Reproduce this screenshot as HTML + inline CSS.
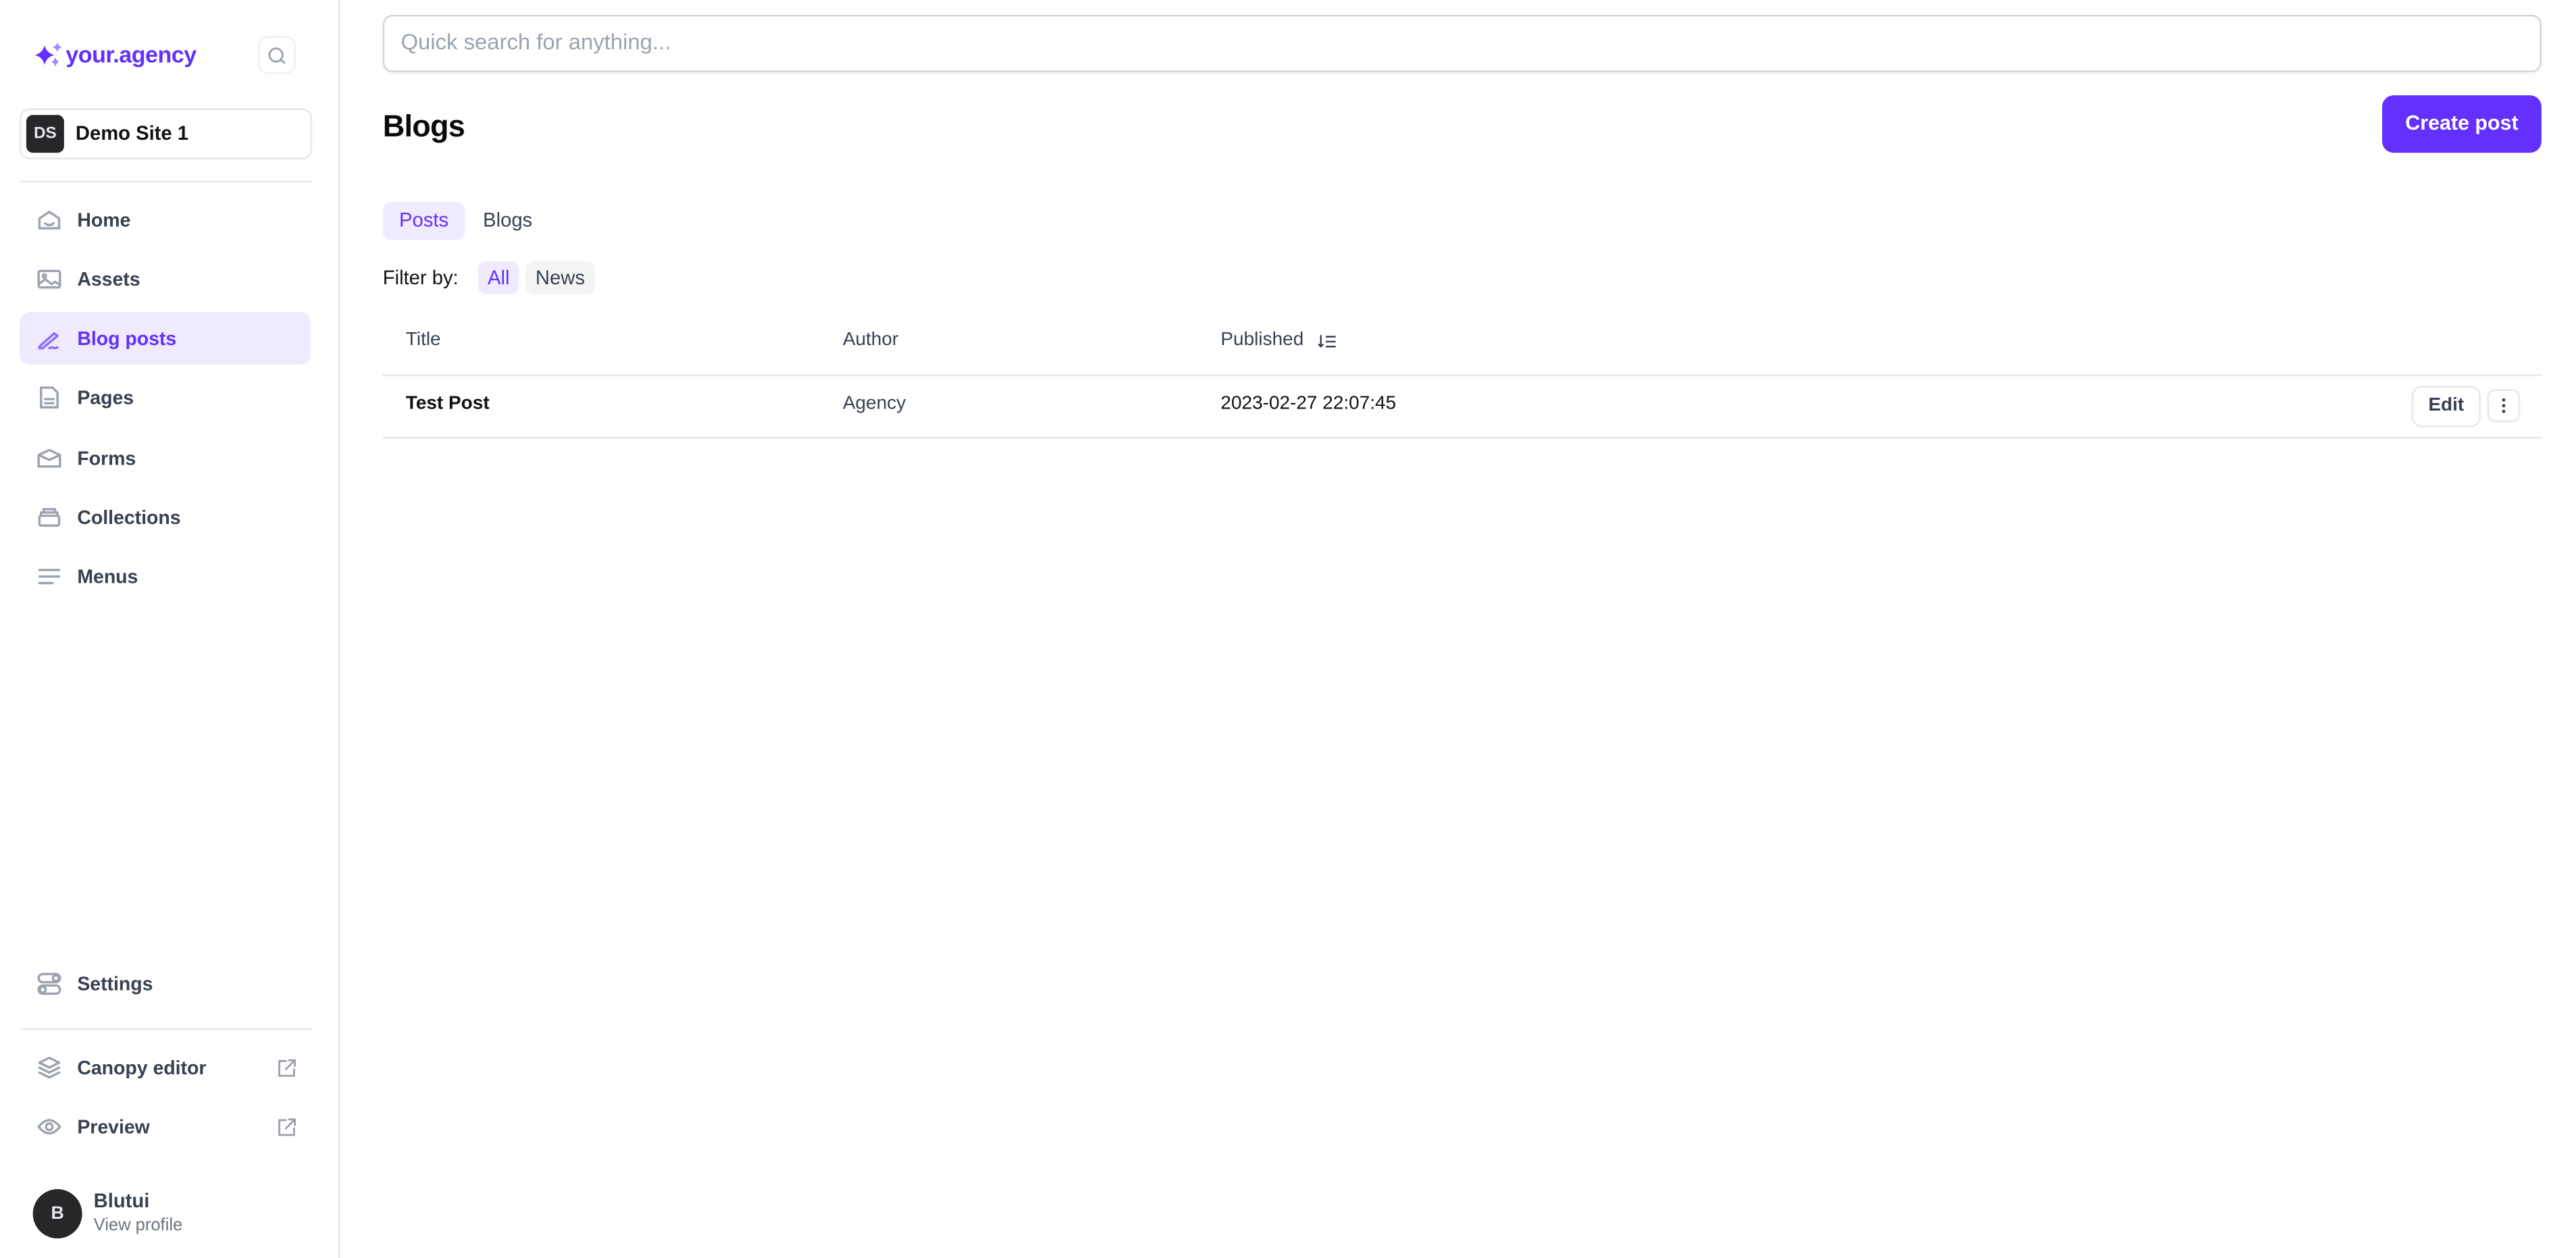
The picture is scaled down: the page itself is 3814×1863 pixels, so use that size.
<!DOCTYPE html>
<html><head><meta charset="utf-8"><style>
*{box-sizing:border-box;margin:0;padding:0}
html,body{width:3814px;height:1862px;overflow:hidden;background:#fff}
#w{position:absolute;left:0;top:0;width:1568px;height:766px;transform:scale(2.4324);transform-origin:0 0;font-family:"Liberation Sans",sans-serif;color:#111827}
.a{position:absolute}
.nav{position:absolute;left:12px;width:177px;height:32px;display:flex;align-items:center;font-size:11.7px;font-weight:bold;color:#374151}
.nav svg.ic{position:absolute;left:10px;width:16px;height:16px;fill:none;stroke:#9ca3af;stroke-width:1.4;stroke-linecap:round;stroke-linejoin:round}
.nav span{position:absolute;left:35px}
.nav svg.ext{position:absolute;left:156px;width:13px;height:13px;fill:none;stroke:#9ca3af;stroke-width:1.2;stroke-linecap:round;stroke-linejoin:round}
</style></head><body><div id="w">
<div class="a" style="left:206px;top:0;width:1px;height:766px;background:#e5e7eb"></div>
<svg class="a" style="left:20px;top:25px" width="19" height="17" viewBox="0 0 16 14"><path d="M6 2 Q7 6 11 7 Q7 8 6 12 Q5 8 1 7 Q5 6 6 2Z" fill="#6330ff"/><path d="M12.5 0.5 Q13 2.5 15 3 Q13 3.5 12.5 5.5 Q12 3.5 10 3 Q12 2.5 12.5 .5Z" fill="#a38bff"/><path d="M11.5 8 Q12 10 13.5 10.5 Q12 11 11.5 13 Q11 11 9.5 10.5 Q11 10 11.5 8Z" fill="#a38bff"/></svg>
<div class="a" style="left:40px;top:25px;font-size:14px;font-weight:bold;color:#6330ff;letter-spacing:-0.2px">your.agency</div>
<div class="a" style="left:157px;top:22px;width:23px;height:23px;border:1px solid #f1f1f3;border-radius:6px"></div>
<svg class="a" style="left:162px;top:28px" width="13" height="12" viewBox="0 0 13 12" fill="none" stroke="#9ca3af" stroke-width="1.2"><circle cx="6" cy="5.5" r="4"/><path d="M9 8.5l2.5 2"/></svg>
<div class="a" style="left:12px;top:66px;width:178px;height:31px;border:1px solid #e5e7eb;border-radius:6px"></div>
<div class="a" style="left:16px;top:70px;width:23px;height:23px;background:#27272a;border-radius:4px;color:#e5e7eb;font-size:10px;font-weight:bold;text-align:center;line-height:23px">DS</div>
<div class="a" style="left:46px;top:74px;font-size:12px;font-weight:bold;color:#111">Demo Site 1</div>
<div class="a" style="left:12px;top:110px;width:178px;height:1px;background:#e5e7eb"></div>
<div class="nav" style="top:118px"><svg class="ic" viewBox="0 0 16 16"><path d="M2 7l6-4 6 4v6H2z"/><path d="M5.5 10q2.5 2 5 0"/></svg><span>Home</span></div>
<div class="nav" style="top:154px"><svg class="ic" viewBox="0 0 16 16"><rect x="1.5" y="3" width="13" height="10" rx="1"/><circle cx="5" cy="6" r="1"/><path d="M1.5 11l4-3 4 3 2-1.5 3 2"/></svg><span>Assets</span></div>
<div class="nav" style="top:190px;background:#efeafe;border-radius:6px;color:#6330ff"><svg class="ic" viewBox="0 0 16 16" style="stroke:#8b6bff"><path d="M2 13l9-8 2 1.5-9 7.5H2z"/><path d="M8 14q2-1 3 0 1 0 2-.5"/></svg><span>Blog posts</span></div>
<div class="nav" style="top:226px"><svg class="ic" viewBox="0 0 16 16"><path d="M3 2h7l3 3v9H3z"/><path d="M5.5 9h5M5.5 11.5h5"/></svg><span>Pages</span></div>
<div class="nav" style="top:263px"><svg class="ic" viewBox="0 0 16 16"><path d="M1.5 6l6.5-3 6.5 3v7h-13z"/><path d="M1.5 6l6.5 3 6.5-3"/></svg><span>Forms</span></div>
<div class="nav" style="top:299px"><svg class="ic" viewBox="0 0 16 16"><rect x="2" y="7" width="12" height="6" rx="1"/><path d="M3 7V5h10v2M4.5 5V3h7v2"/></svg><span>Collections</span></div>
<div class="nav" style="top:335px"><svg class="ic" viewBox="0 0 16 16"><path d="M2 4h12M2 8h12M2 12h8"/></svg><span>Menus</span></div>
<div class="nav" style="top:583px"><svg class="ic" viewBox="0 0 16 16"><rect x="1.5" y="2" width="13" height="5" rx="2.5"/><rect x="1.5" y="9" width="13" height="5" rx="2.5"/><circle cx="12" cy="4.5" r="1.8"/><circle cx="4" cy="11.5" r="1.8"/></svg><span>Settings</span></div>
<div class="a" style="left:12px;top:626px;width:178px;height:1px;background:#e5e7eb"></div>
<div class="nav" style="top:634px"><svg class="ic" viewBox="0 0 16 16"><path d="M8 2l6 3-6 3-6-3z"/><path d="M2 8l6 3 6-3M2 11l6 3 6-3"/></svg><span>Canopy editor</span><svg class="ext" viewBox="0 0 13 13"><path d="M6 2H2v9h9V7M8 1.5h3.5V5M11.5 1.5L6 7"/></svg></div>
<div class="nav" style="top:670px"><svg class="ic" viewBox="0 0 16 16"><path d="M1.5 8q6.5-8 13 0-6.5 8-13 0z"/><circle cx="8" cy="8" r="2"/></svg><span>Preview</span><svg class="ext" viewBox="0 0 13 13"><path d="M6 2H2v9h9V7M8 1.5h3.5V5M11.5 1.5L6 7"/></svg></div>
<div class="a" style="left:20px;top:724px;width:30px;height:30px;border-radius:50%;background:#27272a;color:#e5e7eb;font-size:11px;font-weight:bold;text-align:center;line-height:30px">B</div>
<div class="a" style="left:57px;top:724px;font-size:12px;font-weight:bold;color:#374151">Blutui</div>
<div class="a" style="left:57px;top:740px;font-size:10.5px;color:#6b7280">View profile</div>

<div class="a" style="left:233px;top:9px;width:1314px;height:35px;border:1px solid #d1d5db;border-radius:6px;box-shadow:0 1px 2px rgba(0,0,0,.05)"></div>
<div class="a" style="left:244px;top:18px;font-size:13.5px;color:#9ca3af">Quick search for anything...</div>
<div class="a" style="left:233px;top:66px;font-size:18.5px;font-weight:bold;color:#0a0a0a;letter-spacing:-0.3px">Blogs</div>
<div class="a" style="left:1450px;top:58px;width:97px;height:35px;border-radius:7px;background:#6330ff;color:#fff;font-size:12.5px;font-weight:bold;text-align:center;line-height:35px">Create post</div>
<div class="a" style="left:233px;top:123px;width:50px;height:23px;border-radius:5px;background:#efeafe;color:#6330ff;font-size:12px;text-align:center;line-height:23px">Posts</div>
<div class="a" style="left:294px;top:127px;font-size:12px;color:#374151">Blogs</div>
<div class="a" style="left:233px;top:162px;font-size:12px;color:#111">Filter by:</div>
<div class="a" style="left:291px;top:159px;width:25px;height:20px;border-radius:5px;background:#efeafe;color:#6330ff;font-size:12px;text-align:center;line-height:20px">All</div>
<div class="a" style="left:320px;top:159px;width:42px;height:20px;border-radius:5px;background:#f4f4f5;color:#374151;font-size:12px;text-align:center;line-height:20px">News</div>
<div class="a" style="left:247px;top:201px;font-size:11.5px;color:#374151">Title</div>
<div class="a" style="left:513px;top:201px;font-size:11.5px;color:#374151">Author</div>
<div class="a" style="left:743px;top:201px;font-size:11.5px;color:#374151">Published</div>
<svg class="a" style="left:802px;top:203px" width="12" height="10" viewBox="0 0 12 10" fill="none" stroke="#374151" stroke-width="1"><path d="M2 1v7M.5 6.5L2 8l1.5-1.5M5 2h6M5 5h6M5 8h6"/></svg>
<div class="a" style="left:233px;top:228px;width:1314px;height:1px;background:#e5e7eb"></div>
<div class="a" style="left:247px;top:240px;font-size:11.5px;font-weight:bold;color:#111">Test Post</div>
<div class="a" style="left:513px;top:240px;font-size:11.5px;color:#374151">Agency</div>
<div class="a" style="left:743px;top:240px;font-size:11.5px;color:#111">2023-02-27 22:07:45</div>
<div class="a" style="left:1468px;top:235px;width:42px;height:25px;border:1px solid #e5e7eb;border-radius:6px;font-size:11.5px;font-weight:bold;color:#374151;text-align:center;line-height:23px">Edit</div>
<div class="a" style="left:1514px;top:237px;width:20px;height:20px;border:1px solid #e5e7eb;border-radius:5px"></div>
<svg class="a" style="left:1522px;top:241px" width="4" height="12" viewBox="0 0 4 12" fill="#374151"><circle cx="2" cy="2.5" r="1"/><circle cx="2" cy="6" r="1"/><circle cx="2" cy="9.5" r="1"/></svg>
<div class="a" style="left:233px;top:266px;width:1314px;height:1px;background:#e5e7eb"></div>
</div></body></html>
